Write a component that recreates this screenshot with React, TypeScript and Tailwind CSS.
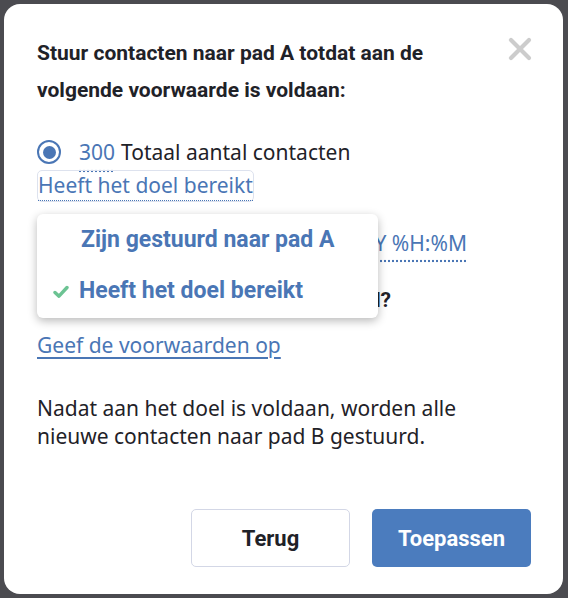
import React from "react";

const BLUE = "#4a76b5";

function Radio() {
  return (
    <span className="flex h-[24px] w-[24px] shrink-0 items-center justify-center rounded-full border-[2.5px] border-[#4a76b5] bg-white">
      <span className="h-[13px] w-[13px] rounded-full bg-[#4a76b5]" />
    </span>
  );
}

function RadioOff() {
  return <span className="h-[24px] w-[24px] shrink-0 rounded-full border-[2px] border-[#b9bfcc] bg-white" />;
}

function CloseIcon() {
  return (
    <svg width="24" height="24" viewBox="0 0 24 24" className="shrink-0">
      <path d="M3 3 L21 21 M21 3 L3 21" stroke="#cccccc" strokeWidth="4.2" strokeLinecap="round" fill="none" />
    </svg>
  );
}

function Check() {
  return (
    <svg width="16" height="14" viewBox="0 0 16 14" className="shrink-0">
      <path d="M2 7.5 L6 11.2 L14 2.5" stroke="#6cc393" strokeWidth="3.4" strokeLinecap="round" strokeLinejoin="round" fill="none" />
    </svg>
  );
}

export default function App() {
  const regular = { fontFamily: '"Noto Sans", "Liberation Sans", sans-serif' };
  const bold = { fontFamily: 'Roboto, "Liberation Sans", sans-serif' };
  return (
    <div className="min-h-[598px] w-[568px] bg-[#4b4b50] pt-[4px] pl-[4px]" style={regular}>
      <div className="flex h-[590px] w-[559px] flex-col rounded-[16px] bg-white pl-[33px] pr-[32px] pt-[31px] text-[#1f2228]">
        <div className="flex items-start gap-[20px]">
          <h2 className="flex-1 text-[21px] font-bold leading-[37px] text-[#1f2228]" style={bold}>
            Stuur contacten naar pad A totdat aan de volgende voorwaarde is voldaan:
          </h2>
          <div className="mt-[2px] -mr-[1px]">
            <CloseIcon />
          </div>
        </div>

        <div className="mt-[29px] flex h-[28px] items-center text-[21px] leading-[28px]">
          <Radio />
          <span className="ml-[18px] text-[#4a76b5] underline decoration-dotted decoration-[#4a76b5] underline-offset-[10px]">300</span>
          <span className="ml-[6px]">Totaal aantal contacten</span>
        </div>

        <div className="relative mt-[4px] self-start">
          <div className="flex h-[32px] items-end rounded-[5px] border border-[#dde2ee]">
            <span className="block border-b border-dotted border-[#4a76b5] text-[21px] leading-[29px] text-[#4a76b5]">
              Heeft het doel bereikt
            </span>
          </div>

          <div className="absolute left-0 top-[44px] z-10 flex w-[341px] flex-col rounded-[6px] bg-white py-[1px] shadow-[0_3px_10px_rgba(0,0,0,0.28)]" style={bold}>
            <div className="flex h-[51px] items-center pl-[44px] text-[23px] font-bold" style={{ color: BLUE }}>
              Zijn gestuurd naar pad A
            </div>
            <div className="flex h-[51px] items-center gap-[10px] pl-[16px] text-[23px] font-bold" style={{ color: BLUE }}>
              <Check />
              <span>Heeft het doel bereikt</span>
            </div>
          </div>
        </div>

        <div className="mt-[27px] flex h-[28px] w-[430px] items-center whitespace-nowrap text-[21px] leading-[28px]">
          <RadioOff />
          <span className="ml-[18px]">Op datum</span>
          <span className="ml-auto text-[#4a76b5] underline decoration-dotted decoration-[#4a76b5] underline-offset-[9px]">%d-%m-%Y %H:%M</span>
        </div>

        <div className="mt-[29px] h-[28px] w-[354px] whitespace-nowrap text-right text-[21px] font-bold leading-[28px]" style={bold}>
          Wat als het doel niet is gehaald?
        </div>

        <div className="mt-[17px] h-[28px] text-[21px] leading-[28px]">
          <a className="text-[#4a76b5] underline decoration-[#4a76b5] underline-offset-[4px]" href="#">Geef de voorwaarden op</a>
        </div>

        <p className="mt-[35px] text-[21px] leading-[28px]">
          Nadat aan het doel is voldaan, worden alle
          <br />
          nieuwe contacten naar pad B gestuurd.
        </p>

        <div className="mt-[59px] flex justify-end gap-[22px]" style={bold}>
          <button className="h-[58px] w-[159px] rounded-[5px] border border-[#d3d7e6] bg-white text-[22px] font-bold text-[#1f2228]">
            Terug
          </button>
          <button className="h-[58px] w-[159px] rounded-[5px] bg-[#4b7cbe] text-[22px] font-bold text-white">
            Toepassen
          </button>
        </div>
      </div>
    </div>
  );
}
